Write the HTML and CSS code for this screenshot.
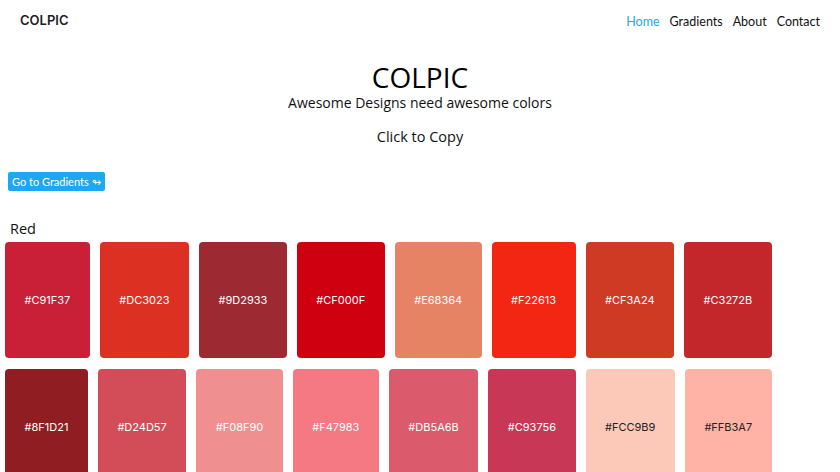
FILE: index.html
```html
<!DOCTYPE html>
<html>
<head>
<meta charset="utf-8">
<link rel="stylesheet" href="styles.css">
</head>
<body>
<nav class="navbar">
  <a class="brand">COLPIC</a>
  <ul class="nav-links">
    <li><a class="active">Home</a></li>
    <li><a>Gradients</a></li>
    <li><a>About</a></li>
    <li><a>Contact</a></li>
  </ul>
</nav>
<header class="hero">
  <h1>COLPIC</h1>
  <p class="tagline">Awesome Designs need awesome colors</p>
  <p class="hint">Click to Copy</p>
</header>
<div class="actions">
  <a class="btn">Go to Gradients ↬</a>
</div>
<section class="palette">
  <h2>Red</h2>
  <div class="swatches">
    <div class="swatch" style="background:#C91F37">#C91F37</div>
    <div class="swatch" style="background:#DC3023">#DC3023</div>
    <div class="swatch" style="background:#9D2933">#9D2933</div>
    <div class="swatch" style="background:#CF000F">#CF000F</div>
    <div class="swatch" style="background:#E68364">#E68364</div>
    <div class="swatch" style="background:#F22613">#F22613</div>
    <div class="swatch" style="background:#CF3A24">#CF3A24</div>
    <div class="swatch" style="background:#C3272B">#C3272B</div>
  </div>
  <div class="swatches">
    <div class="swatch" style="background:#8F1D21">#8F1D21</div>
    <div class="swatch" style="background:#D24D57">#D24D57</div>
    <div class="swatch" style="background:#F08F90">#F08F90</div>
    <div class="swatch" style="background:#F47983">#F47983</div>
    <div class="swatch" style="background:#DB5A6B">#DB5A6B</div>
    <div class="swatch" style="background:#C93756">#C93756</div>
    <div class="swatch light" style="background:#FCC9B9">#FCC9B9</div>
    <div class="swatch light" style="background:#FFB3A7">#FFB3A7</div>
  </div>
</section>
</body>
</html>
```

FILE: styles.css
```css
* { box-sizing: border-box; }
html, body { margin: 0; padding: 0; background: #fff; }
body {
  font-family: "Open Sans", "Noto Sans", sans-serif;
  color: #111;
  overflow: hidden;
}
a { text-decoration: none; color: inherit; cursor: pointer; }

.navbar {
  height: 40px;
  display: flex;
  align-items: center;
  justify-content: space-between;
  padding: 0 20px;
}
.brand {
  font-family: Inter, sans-serif;
  font-size: 13px;
  font-weight: 600;
  color: #222;
}
.nav-links {
  list-style: none;
  margin: 0;
  padding: 0;
  display: flex;
  gap: 10px;
}
.nav-links a {
  font-family: Lato, sans-serif;
  font-size: 12.5px;
  color: #111;
}
.nav-links a.active { color: #1ea7f2; }

.hero {
  text-align: center;
  padding-top: 20px;
}
.hero h1 {
  margin: 0;
  font-size: 28px;
  font-weight: 400;
  line-height: 34px;
  color: #000;
}
.tagline {
  margin: 0;
  font-size: 14px;
  line-height: 18px;
}
.hint {
  margin: 16px 0 0;
  font-size: 14.5px;
  line-height: 18px;
}
.actions {
  padding: 23px 8px 0;
}
.btn {
  display: inline-block;
  background: #1ea7f2;
  color: #fff;
  font-family: Lato, sans-serif;
  font-size: 11px;
  line-height: 19px;
  padding: 0 4px;
  border-radius: 2px;
}
.palette { padding: 0 0 0 5px; }
.palette h2 {
  margin: 29px 0 4px 5px;
  font-size: 14.5px;
  font-weight: 400;
  line-height: 18px;
}
.swatches {
  display: flex;
  gap: 10px;
  margin-bottom: 11px;
}
.swatch {
  height: 116px;
  display: flex;
  align-items: center;
  justify-content: center;
  padding: 0 19.5px;
  border-radius: 4px;
  font-family: Inter, sans-serif;
  font-size: 11px;
  color: #fff;
}
.swatch.light { color: #222; }
```
